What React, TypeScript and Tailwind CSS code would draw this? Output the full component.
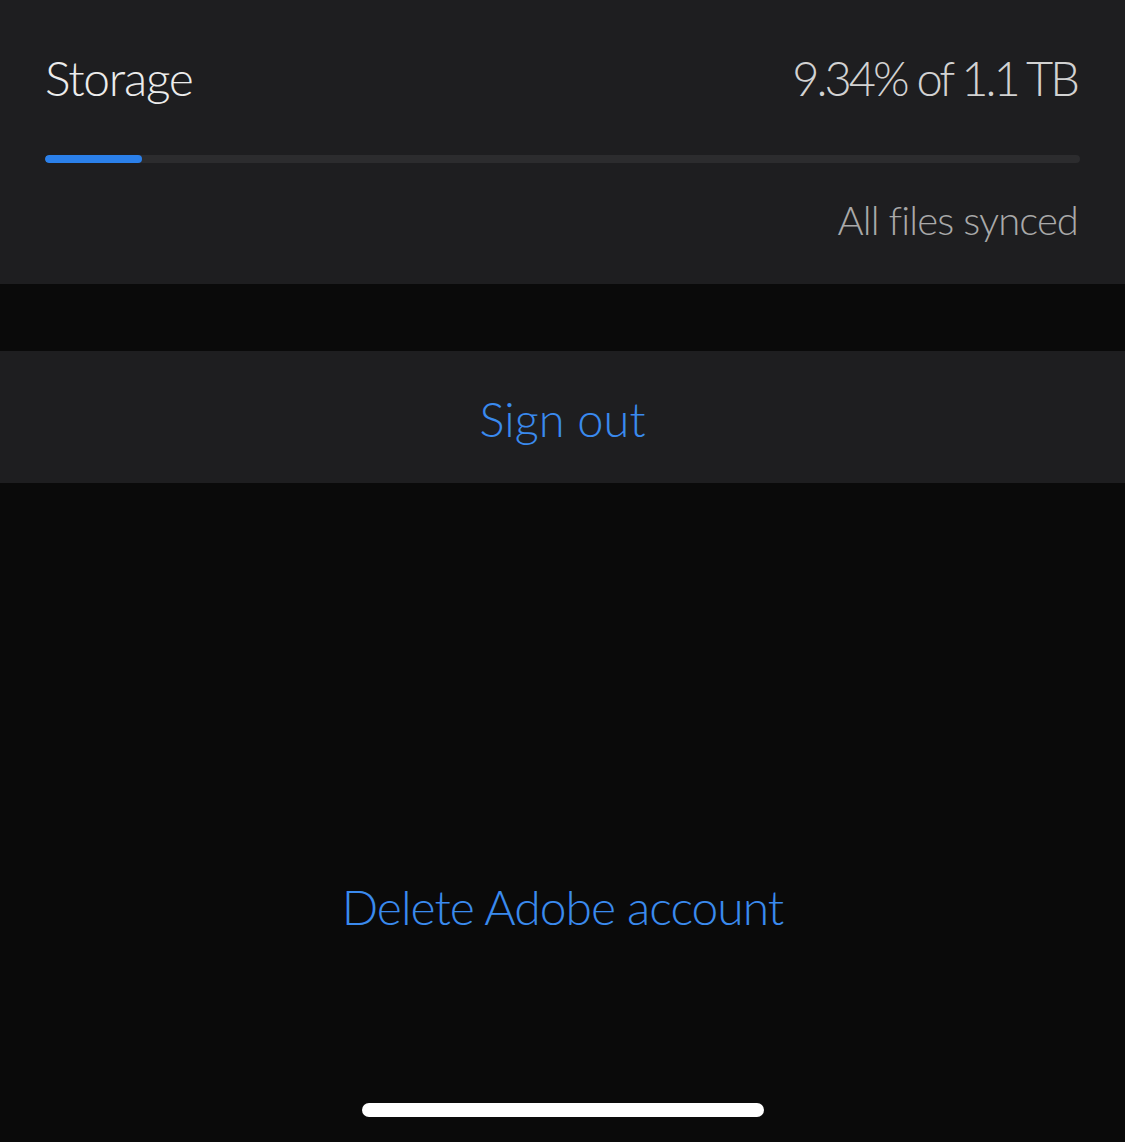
export default function App() {
  const used = 9.34;

  return (
    <div
      className="flex min-h-[1142px] w-full flex-col bg-[#0a0a0a]"
      style={{ fontFamily: "Lato, 'Open Sans', sans-serif" }}
    >
      {/* storage card */}
      <section className="h-[284px] bg-[#1e1e20] px-[45px] pt-[54px]">
        <div className="flex items-start justify-between">
          <span className="text-[48px] font-light leading-[48px] tracking-[-1.3px] text-[#ececec]">Storage</span>
          <span className="pr-[3px] text-[47px] font-light leading-[48px] tracking-[-3px] text-[#d2d2d2]">9.34% of 1.1 TB</span>
        </div>
        <div className="mt-[53px] h-[8px] w-full overflow-hidden rounded-full bg-[#2c2c2e]">
          <div className="h-full rounded-full bg-[#2b80ea]" style={{ width: `${used}%` }} />
        </div>
        <p className="mt-[37px] pr-[2px] text-right text-[40px] font-light leading-[40px] tracking-[-0.9px] text-[#a9a9a9]">
          All files synced
        </p>
      </section>

      <div className="h-[67px]" />

      <button
        type="button"
        className="flex h-[132px] w-full items-center justify-center bg-[#1e1e20] pt-[4px] text-[47px] font-light text-[#3a8aee]"
      >
        Sign out
      </button>

      <div className="flex flex-1 flex-col items-center">
        <button
          type="button"
          className="mt-[400px] text-[48px] font-light leading-[48px] tracking-[-1px] text-[#3a8aee]"
        >
          Delete Adobe account
        </button>
        <div className="mt-auto mb-[25px] h-[14px] w-[402px] rounded-full bg-white" />
      </div>
    </div>
  );
}
